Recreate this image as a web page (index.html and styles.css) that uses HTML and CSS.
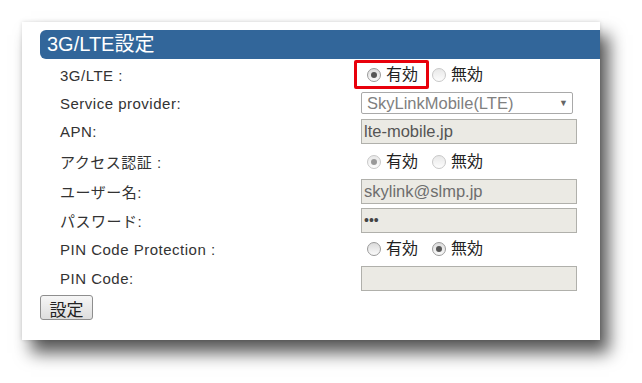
FILE: index.html
```html
<!DOCTYPE html>
<html lang="ja">
<head>
  <meta charset="UTF-8">
  <title>3G/LTE設定</title>
  <link rel="stylesheet" href="styles.css">
</head>
<body>

  <div class="panel">
    <div class="title">3G/LTE設定</div>

    <div class="form">
      <div class="label">3G/LTE :</div>
      <div class="choice">
        <span class="opt marked"><span class="radio on"></span>有効</span>
        <span class="opt"><span class="radio faded"></span>無効</span>
      </div>

      <div class="label">Service provider:</div>
      <div class="field">
        <div class="select">SkyLinkMobile(LTE)<span class="arrow">&#9660;</span></div>
      </div>

      <div class="label">APN:</div>
      <div class="field"><div class="input dark">lte-mobile.jp</div></div>

      <div class="label">アクセス認証 :</div>
      <div class="choice">
        <span class="opt"><span class="radio on faded"></span>有効</span>
        <span class="opt"><span class="radio faded"></span>無効</span>
      </div>

      <div class="label">ユーザー名:</div>
      <div class="field"><div class="input">skylink@slmp.jp</div></div>

      <div class="label">パスワード:</div>
      <div class="field"><div class="input dots">&bull;&bull;&bull;</div></div>

      <div class="label">PIN Code Protection :</div>
      <div class="choice">
        <span class="opt"><span class="radio"></span>有効</span>
        <span class="opt"><span class="radio on"></span>無効</span>
      </div>

      <div class="label">PIN Code:</div>
      <div class="field"><div class="input"></div></div>
    </div>

    <button class="submit">設定</button>
  </div>

</body>
</html>
```

FILE: styles.css
```css
body {
  margin: 0;
  padding: 22px 0 43px 22px;
  background: #fff;
  font-family: "Liberation Sans", Arial, "Noto Sans CJK JP", sans-serif;
  color: #333;
}
.panel {
  width: 560px;
  height: 310px;
  padding: 8px 0 0 18px;
  background: #fff;
  box-shadow: 0 0 4px rgba(0,0,0,0.14), 9px 13px 16px rgba(0,0,0,0.65);
}
.title {
  height: 29px;
  line-height: 29px;
  padding-left: 7px;
  background: #32669a;
  color: #fff;
  font-size: 20px;
  border-radius: 6px 0 0 6px;
}
.form {
  display: grid;
  grid-template-columns: 301px 216px;
  grid-template-rows: 30px 26px 30px 31px 29px 29px 28px 30px;
  align-items: center;
  margin-left: 20px;
  margin-top: 1px;
  font-size: 15px;
}
.label {
  color: #333;
  letter-spacing: 0.5px;
}
.choice {
  display: flex;
  align-items: center;
  gap: 14px;
  padding-left: 6px;
  font-size: 16px;
  color: #222;
}
.opt {
  position: relative;
  display: flex;
  align-items: center;
  gap: 5px;
  line-height: 20px;
}
.opt.marked::after {
  content: "";
  position: absolute;
  left: -13px;
  right: -11px;
  top: -5px;
  bottom: -4px;
  border: 3px solid #e8000b;
  border-radius: 2px;
}
.radio {
  width: 12px;
  height: 12px;
  border: 1px solid #9a9a9a;
  border-radius: 50%;
  background: linear-gradient(#dcdcdc, #fafafa);
  display: flex;
  align-items: center;
  justify-content: center;
}
.radio.on::before {
  content: "";
  width: 6px;
  height: 6px;
  border-radius: 50%;
  background: #555;
}
.radio.faded {
  border-color: #c8c8c8;
  background: linear-gradient(#e8e8e8, #fdfdfd);
}
.radio.on.faded::before {
  background: #999;
}
.select {
  width: 201px;
  height: 20px;
  line-height: 20px;
  padding: 0 4px 0 5px;
  border: 1px solid #a9a9a9;
  border-radius: 2px;
  background: #fff;
  color: #808080;
  font-size: 16.5px;
  display: flex;
  justify-content: space-between;
}
.arrow {
  font-size: 9px;
  color: #666;
}
.input {
  height: 23px;
  line-height: 23px;
  padding: 0 2px;
  border: 1px solid #b0b0ab;
  background: #ebeae4;
  color: #6e6e6e;
  font-size: 16.5px;
}
.input.dark {
  color: #555;
}
.input.dots {
  font-size: 14px;
  color: #444;
}
.submit {
  margin-top: 2px;
  width: 53px;
  height: 25px;
  padding: 0;
  border: 1px solid #8e8e8e;
  border-radius: 3px;
  background: linear-gradient(#f6f6f6, #dddddd);
  font-family: "Noto Sans CJK JP", sans-serif;
  font-size: 17px;
  color: #222;
}
```
